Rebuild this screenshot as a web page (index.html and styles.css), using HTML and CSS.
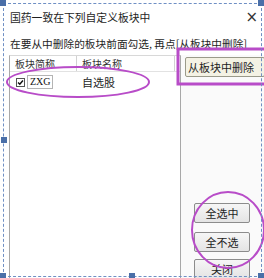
FILE: index.html
```html
<!DOCTYPE html>
<html lang="zh">
<head>
<meta charset="utf-8">
<link rel="stylesheet" href="styles.css">
</head>
<body>
<div class="frame">
  <div class="dialog">
    <div class="titlebar">
      <span class="title">国药一致在下列自定义板块中</span>
      <span class="close">×</span>
    </div>
    <div class="hint">在要从中删除的板块前面勾选, 再点[从板块中删除]</div>
    <div class="body">
      <div class="list">
        <div class="list-header">
          <div class="hcell">板块简称</div>
          <div class="hcell">板块名称</div>
          <div class="hcell"></div>
        </div>
        <div class="list-row">
          <div class="cell first">
            <span class="check">
              <svg viewBox="0 0 8 8" width="7" height="7"><path d="M1.2 4 L3.2 6 L6.8 1.8" fill="none" stroke="#111" stroke-width="1.7"/></svg>
            </span>
            <span class="code">ZXG</span>
          </div>
          <div class="cell name">自选股</div>
        </div>
      </div>
      <div class="side">
        <button class="btn btn-delete">从板块中删除</button>
        <div class="btn-group">
          <button class="btn">全选中</button>
          <button class="btn">全不选</button>
          <button class="btn">关闭</button>
        </div>
      </div>
    </div>
  </div>

  <svg class="marks" width="264" height="278" viewBox="0 0 264 278">
    <ellipse cx="78" cy="82" rx="71" ry="15" fill="none" stroke="#b84cc8" stroke-width="2"/>
    <rect x="178" y="49" width="94" height="35" fill="none" stroke="#b84cc8" stroke-width="3"/>
    <ellipse cx="228" cy="230" rx="36" ry="38" fill="none" stroke="#b84cc8" stroke-width="2"/>
  </svg>

  <div class="selection"></div>
  <span class="handle h-tl"></span>
  <span class="handle h-tr"></span>
  <span class="handle h-ml"></span>
  <span class="handle h-bl"></span>
  <span class="handle h-bm"></span>
  <span class="handle h-br"></span>
</div>
</body>
</html>
```

FILE: styles.css
```css
html, body {
  margin: 0;
  padding: 0;
  background: #ffffff;
}

.frame {
  position: relative;
  width: 264px;
  height: 278px;
  overflow: hidden;
  background: #ffffff;
  font-family: "Noto Sans CJK SC", "Noto Sans", sans-serif;
  color: #1e1e1e;
}

.dialog {
  display: flex;
  flex-direction: column;
  height: 278px;
}

.titlebar {
  display: flex;
  justify-content: space-between;
  align-items: center;
  height: 20px;
  margin-top: 7px;
  padding: 0 6px 0 10px;
  font-size: 10.8px;
  line-height: 20px;
}

.close {
  font-family: "DejaVu Sans", sans-serif;
  font-size: 15px;
  color: #333;
}

.hint {
  margin-top: 9px;
  padding-left: 10px;
  height: 16px;
  font-size: 10.7px;
  line-height: 16px;
  white-space: nowrap;
}

.body {
  display: flex;
  margin-top: 3px;
  flex: 1;
}

.list {
  margin-left: 9px;
  width: 174px;
  border-left: 1px solid #a8a8a8;
  border-right: 1px solid #a8a8a8;
  border-top: 1px solid #d8d8d8;
  background: #ffffff;
}

.list-header {
  display: grid;
  grid-template-columns: 67px 98px 1fr;
  height: 15px;
  border-bottom: 1px solid #e2e2e2;
}

.hcell {
  border-right: 1px solid #d2d2d2;
  padding-left: 5px;
  font-size: 10px;
  line-height: 15px;
  color: #333;
}

.hcell:last-child {
  border-right: none;
}

.list-row {
  display: flex;
  align-items: center;
  height: 18px;
  margin-top: 1px;
}

.cell.first {
  display: flex;
  align-items: center;
  width: 67px;
  padding-left: 6px;
  box-sizing: border-box;
  gap: 2px;
}

.check {
  display: flex;
  align-items: center;
  justify-content: center;
  width: 7px;
  height: 7px;
  border: 1px solid #555;
  background: #fff;
}

.code {
  display: inline-block;
  width: 26px;
  height: 14px;
  box-sizing: border-box;
  border: 1px solid #b4b4b4;
  font-family: "Liberation Serif", serif;
  font-size: 10px;
  line-height: 12px;
  padding-left: 2px;
  color: #111;
}

.cell.name {
  padding-left: 5px;
  font-size: 11px;
  line-height: 18px;
}

.side {
  flex: 1;
  display: flex;
  flex-direction: column;
  background: #fafafa;
  padding-top: 2px;
}

.btn {
  font-family: "Noto Sans CJK SC", "Noto Sans", sans-serif;
  font-size: 11px;
  color: #1e1e1e;
  border: 1px solid #8c8c8c;
  border-radius: 2px;
  background: linear-gradient(#f6f6f6, #e4e4e4);
  padding: 0;
  height: 20px;
  line-height: 18px;
}

.btn-delete {
  margin-left: 4px;
  width: 80px;
  background: #f4f2e4;
  border-color: #9a9a8a;
  text-align: left;
  padding-left: 2px;
}

.btn-group {
  display: flex;
  flex-direction: column;
  gap: 9px;
  margin-top: 126px;
  margin-left: 13px;
}

.btn-group .btn {
  width: 56px;
}

.btn-group .btn:last-child {
  margin-top: -2px;
}

.marks {
  position: absolute;
  left: 0;
  top: 0;
  pointer-events: none;
}

.selection {
  position: absolute;
  left: 3px;
  top: 3px;
  width: 257px;
  height: 272px;
  border: 1px dashed #6f8fc4;
  pointer-events: none;
}

.handle {
  position: absolute;
  width: 6px;
  height: 6px;
  background: #4a6fa8;
}

.h-tl { left: 0; top: 0; }
.h-tr { left: 258px; top: 0; }
.h-ml { left: 1px; top: 137px; }
.h-bl { left: 0; top: 273px; }
.h-bm { left: 129px; top: 273px; }
.h-br { left: 258px; top: 273px; }
```
